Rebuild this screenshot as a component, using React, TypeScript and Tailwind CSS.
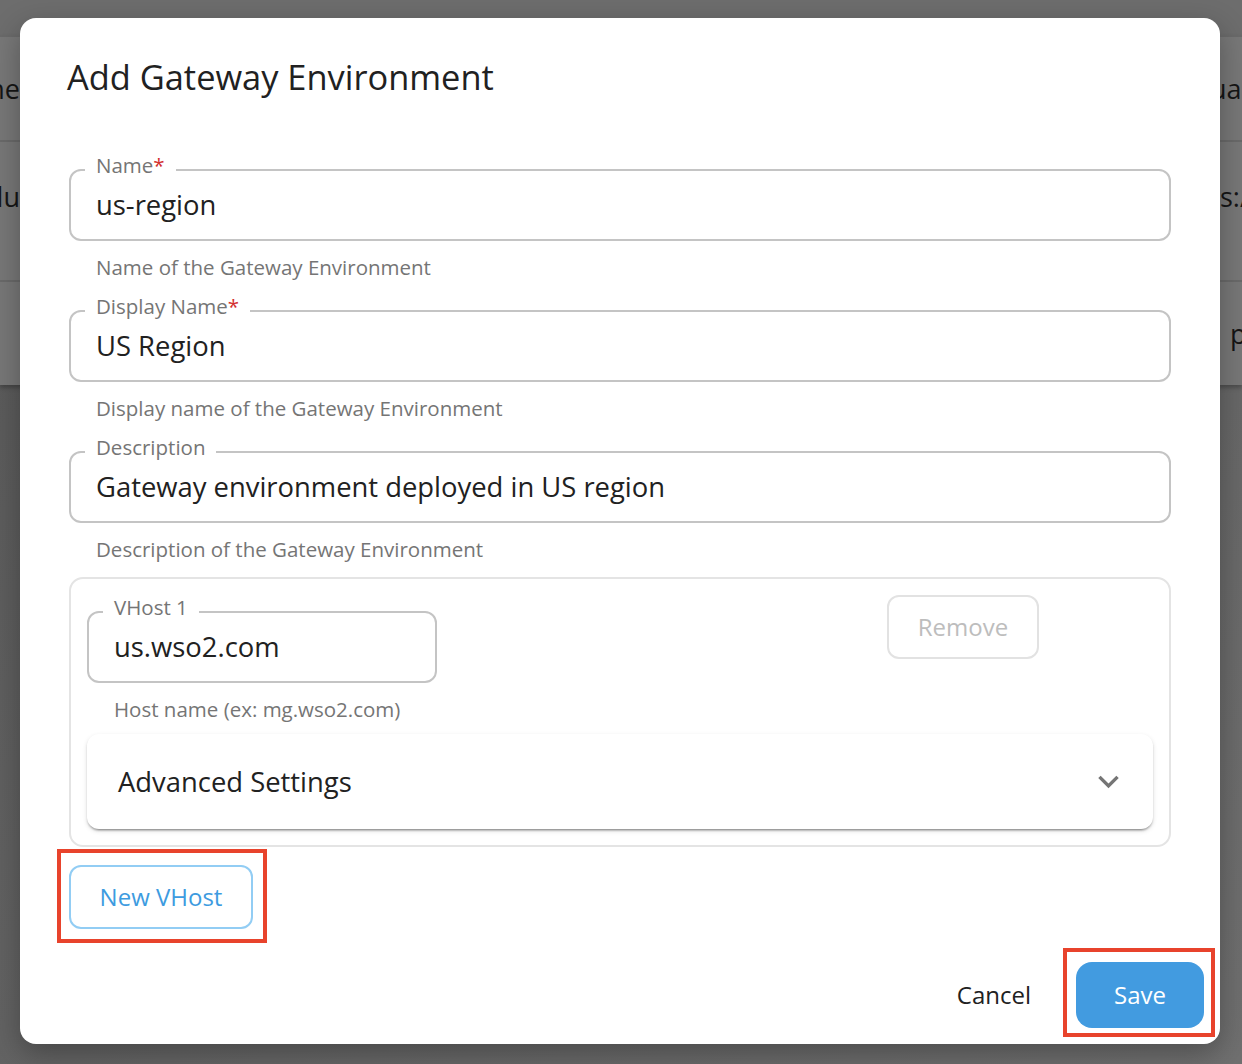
import * as React from 'react';

interface FieldProps {
  label: string;
  value: string;
  helper: string;
  required?: boolean;
  className?: string;
}

// MUI-like outlined text field with notched label
const OutlinedField = ({ label, value, helper, required, className }: FieldProps) => (
  <div className={className}>
    <div className="relative flex h-[72px] items-center rounded-[12px] border-2 border-[#c4c4c4] pl-[25px]">
      <span className="absolute left-[14px] top-[-16px] whitespace-nowrap bg-white px-[11px] text-[20.5px] leading-[20px] text-[#757575]">
        {label}
        {required && <span className="text-[#d32f2f]">*</span>}
      </span>
      <span className="whitespace-nowrap text-[27.4px] leading-[36px] text-[#212121]">{value}</span>
    </div>
    <p className="mt-[16px] pl-[27px] text-[20.5px] leading-[20px] text-[#757575]">{helper}</p>
  </div>
);

const ExpandMore = () => (
  <svg width="41" height="41" viewBox="0 0 24 24" fill="#757575">
    <path d="M16.59 8.59 12 13.17 7.41 8.59 6 10l6 6 6-6z" />
  </svg>
);

export default function App() {
  return (
    <div className="relative h-[1064px] w-[1242px] overflow-hidden bg-linear-to-br from-[#575757] to-[#707070] font-['Open_Sans',sans-serif]">
      {/* Page behind the overlay */}
      <div className="h-[35px] bg-[#6d6d6d]" />
      <div className="bg-[#787878] text-[27px] leading-[36px] text-[#151515] shadow-[0_3px_4px_rgba(0,0,0,0.25)]">
        <div className="flex h-[105px] items-center justify-between border-t-2 border-[#6a6a6a]">
          <div className="flex w-[20px] justify-end whitespace-nowrap">Name</div>
          <div className="w-[32px] whitespace-nowrap">ual</div>
        </div>
        <div className="flex h-[140px] items-start justify-between border-t-2 border-[#6a6a6a] pt-[37px]">
          <div className="flex w-[20px] justify-end whitespace-nowrap">Clu</div>
          <div className="w-[22px] whitespace-nowrap">s:/</div>
        </div>
        <div className="flex h-[105px] items-center justify-between border-t-2 border-[#6a6a6a]">
          <div className="w-[20px]" />
          <div className="w-[20px] whitespace-nowrap pl-[8px]">p</div>
        </div>
      </div>

      {/* Dialog */}
      <div className="absolute left-[20px] top-[18px] flex h-[1026px] w-[1200px] flex-col rounded-[16px] bg-white shadow-[0_10px_30px_rgba(0,0,0,0.3)]">
        <div className="px-[49px] pt-[36px]">
          <h2 className="-ml-[2px] text-[34.4px] font-normal leading-[46px] text-[#212121]">
            Add Gateway Environment
          </h2>

          <OutlinedField className="mt-[69px]" label="Name" required value="us-region" helper="Name of the Gateway Environment" />
          <OutlinedField className="mt-[33px]" label="Display Name" required value="US Region" helper="Display name of the Gateway Environment" />
          <OutlinedField
            className="mt-[33px]"
            label="Description"
            value="Gateway environment deployed in US region"
            helper="Description of the Gateway Environment"
          />

          {/* VHost block */}
          <div className="mt-[18px] rounded-[14px] border-2 border-[#e4e4e4] px-[16px] pb-[16px] pt-[16px]">
            <div className="flex items-start">
              <OutlinedField className="mt-[16px] w-[350px]" label="VHost 1" value="us.wso2.com" helper="Host name (ex: mg.wso2.com)" />
              <button
                type="button"
                className="ml-[450px] h-[64px] w-[152px] rounded-[12px] border-2 border-[#e2e2e2] text-[24px] text-[#bdbdbd]"
              >
                Remove
              </button>
            </div>
            <div className="mt-[15px] flex h-[95px] items-center justify-between rounded-[12px] bg-white pl-[31px] pr-[24px] shadow-[0_3px_2px_-2px_rgba(0,0,0,0.3),0_2px_2px_0_rgba(0,0,0,0.14),0_2px_5px_0_rgba(0,0,0,0.12)]">
              <span className="text-[27.4px] leading-[36px] text-[#212121]">Advanced Settings</span>
              <ExpandMore />
            </div>
          </div>

          <div className="relative mt-[18px] w-[184px]">
            <button
              type="button"
              className="h-[64px] w-[184px] rounded-[12px] border-2 border-[#92cdf4] text-[24px] text-[#3d9be0]"
            >
              New VHost
            </button>
            <span className="pointer-events-none absolute -bottom-[14px] -left-[12px] -right-[14px] -top-[16px] border-4 border-[#e8432c]" />
          </div>
        </div>

        <div className="mt-[33px] flex items-center justify-end px-[16px]">
          <button type="button" className="mr-[28px] h-[66px] px-[17px] text-[24px] text-[#212121]">
            Cancel
          </button>
          <div className="relative">
            <button type="button" className="h-[66px] w-[128px] rounded-[16px] bg-[#429be0] text-[24px] text-white">
              Save
            </button>
            <span className="pointer-events-none absolute -bottom-[9px] -left-[13px] -right-[11px] -top-[14px] border-4 border-[#e8432c]" />
          </div>
        </div>
      </div>
    </div>
  );
}
